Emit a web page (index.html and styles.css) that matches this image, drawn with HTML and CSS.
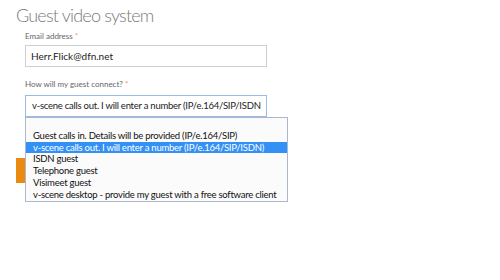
FILE: index.html
```html
<!DOCTYPE html>
<html>
<head>
<meta charset="utf-8">
<link rel="stylesheet" href="styles.css">
</head>
<body>
<div class="page">
  <h1 class="title">Guest video system</h1>
  <div class="form">
    <div class="field">
      <label class="label">Email address <span class="req">*</span></label>
      <div class="input">Herr.Flick@dfn.net</div>
    </div>
    <div class="field field-select">
      <label class="label">How will my guest connect? <span class="req">*</span></label>
      <div class="select">v-scene calls out. I will enter a number (IP/e.164/SIP/ISDN</div>
      <ul class="dropdown">
        <li class="opt">&nbsp;</li>
        <li class="opt">Guest calls in. Details will be provided (IP/e.164/SIP)</li>
        <li class="opt sel">v-scene calls out. I will enter a number (IP/e.164/SIP/ISDN)</li>
        <li class="opt">ISDN guest</li>
        <li class="opt">Telephone guest</li>
        <li class="opt">Visimeet guest</li>
        <li class="opt">v-scene desktop - provide my guest with a free software client</li>
      </ul>
    </div>
  </div>
  <div class="actions">
    <button class="btn" aria-label="Next"></button>
  </div>
</div>
</body>
</html>
```
FILE: styles.css
```css
html, body {
  margin: 0;
  padding: 0;
  background: #fff;
}
body {
  min-height: 280px;
  font-family: Lato, "Open Sans", sans-serif;
  color: #333;
}
.page {
  padding: 4px 16px 0 16px;
  min-height: 276px;
}
.title {
  margin: 0;
  font-size: 18px;
  font-weight: 300;
  letter-spacing: -0.8px;
  color: #7a7a7a;
  line-height: 22px;
}
.form {
  padding-left: 9px;
  display: flex;
  flex-direction: column;
  gap: 12px;
  margin-top: 5px;
}
.field {
  display: flex;
  flex-direction: column;
  gap: 4px;
}
.field-select {
  position: relative;
  gap: 6px;
}
.label {
  font-size: 8px;
  color: #666;
  line-height: 10px;
}
.req {
  color: #f0a050;
}
.input, .select {
  box-sizing: border-box;
  width: 242px;
  height: 22px;
  border: 1px solid #cfcfcf;
  padding: 0 5px;
  font-size: 10px;
  line-height: 20px;
  color: #222;
  white-space: nowrap;
  overflow: hidden;
}
.select {
  border-color: #9bbbe6;
  font-size: 9.5px;
  letter-spacing: -0.25px;
  padding-left: 6px;
}
.dropdown {
  position: absolute;
  left: 0;
  top: 38px;
  margin: 0;
  padding: 0;
  list-style: none;
  width: 263px;
  box-sizing: border-box;
  border: 1px solid #a9b8cf;
  background: #fbfbfb;
  z-index: 2;
}
.opt {
  font-size: 9.5px;
  letter-spacing: -0.25px;
  line-height: 11.8px;
  height: 11.8px;
  padding-left: 7px;
  color: #111;
  white-space: nowrap;
}
.opt.sel {
  background: #3390f5;
  color: #fff;
}
.actions {
  margin-top: 41px;
}
.btn {
  display: block;
  width: 60px;
  height: 25px;
  border: 0;
  padding: 0;
  background: #ea8a10;
}
```
